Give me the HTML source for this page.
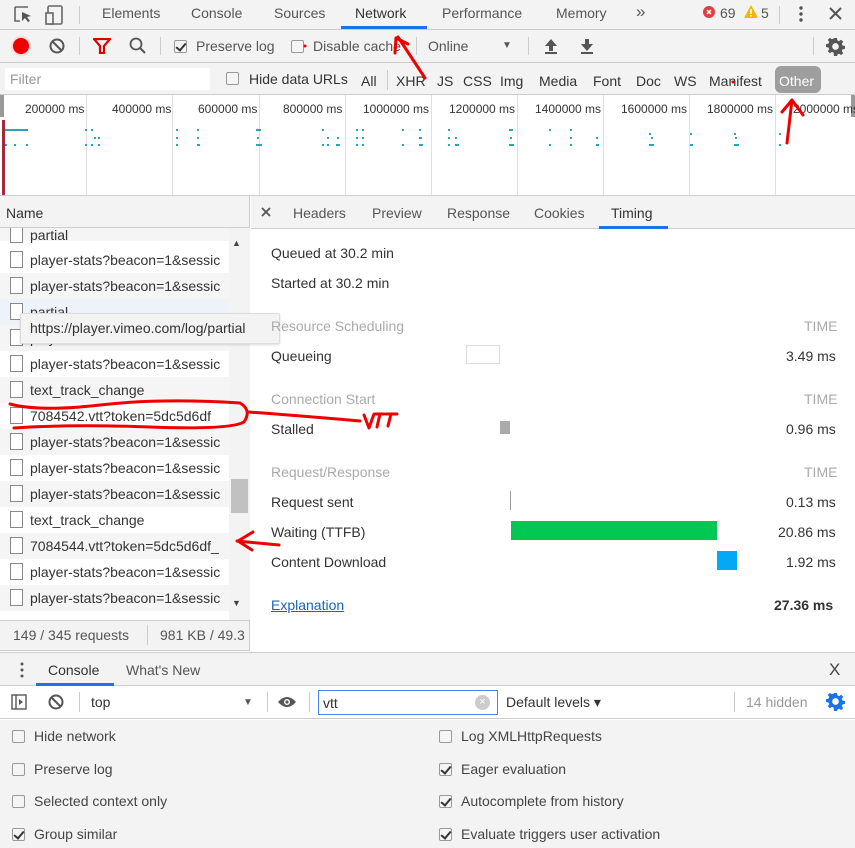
<!DOCTYPE html>
<html><head><meta charset="utf-8"><style>
*{margin:0;padding:0;box-sizing:border-box}
body{width:855px;height:848px;position:relative;overflow:hidden;background:#fff;font-family:"Liberation Sans",Arial,sans-serif;font-size:14px;color:#333}
.a{position:absolute;white-space:nowrap}
.bar{position:absolute;left:0;width:855px;background:#f3f3f3;border-bottom:1px solid #ccc}
.cb{position:absolute;width:13px;height:13px;border:1px solid #999;border-radius:2px;background:#f5f5f5}
.cb.on::after{content:"";position:absolute;left:3px;top:0px;width:4px;height:8px;border:solid #333;border-width:0 2px 2px 0;transform:rotate(40deg)}
.rcb{position:absolute;left:10px;width:13px;height:17px;border:1px solid #888;background:#fff}
.g{color:#aaa}
.sep{position:absolute;width:1px;background:#ccc}
</style></head><body>

<!-- top tabs -->
<div class="bar" style="top:0;height:30px"></div>
<svg class="a" style="left:12px;top:4px" width="60" height="22" viewBox="0 0 60 22">
<path d="M3 3h13M3 3v14h5" stroke="#666" stroke-width="1.6" fill="none"/>
<path d="M10 8l9 4-4 1 3 4-2 1-3-4-3 3z" fill="#555"/>
<rect x="36" y="2" width="14" height="18" rx="1.5" stroke="#666" stroke-width="1.6" fill="none"/>
<rect x="34" y="9" width="7" height="11" stroke="#666" stroke-width="1.6" fill="#f3f3f3"/>
</svg>
<div class="sep" style="left:79px;top:6px;height:18px"></div>
<div class="a" style="left:102px;top:5px;color:#555">Elements</div>
<div class="a" style="left:191px;top:5px;color:#555">Console</div>
<div class="a" style="left:274px;top:5px;color:#555">Sources</div>
<div class="a" style="left:355px;top:5px;color:#333">Network</div>
<div class="a" style="left:341px;top:26px;width:86px;height:3px;background:#1a73e8"></div>
<div class="a" style="left:442px;top:5px;color:#555">Performance</div>
<div class="a" style="left:556px;top:5px;color:#555">Memory</div>
<div class="a" style="left:636px;top:2px;font-size:17px;color:#555">»</div>
<svg class="a" style="left:703px;top:6px" width="12" height="12"><circle cx="6" cy="6" r="6" fill="#e03e3e"/><path d="M4 4l4 4M8 4l-4 4" stroke="#fff" stroke-width="1.5"/></svg>
<div class="a" style="left:720px;top:5px;color:#555">69</div>
<svg class="a" style="left:744px;top:5px" width="14" height="13"><path d="M7 0L14 13H0z" fill="#f4b400"/><rect x="6.2" y="4" width="1.6" height="5" fill="#fff"/><rect x="6.2" y="10" width="1.6" height="1.6" fill="#fff"/></svg>
<div class="a" style="left:761px;top:5px;color:#555">5</div>
<div class="sep" style="left:779px;top:6px;height:18px"></div>
<svg class="a" style="left:798px;top:5px" width="6" height="20"><circle cx="3" cy="3" r="1.7" fill="#555"/><circle cx="3" cy="9" r="1.7" fill="#555"/><circle cx="3" cy="15" r="1.7" fill="#555"/></svg>
<svg class="a" style="left:829px;top:7px" width="13" height="13"><path d="M1 1l11 11M12 1L1 12" stroke="#555" stroke-width="2"/></svg>

<!-- toolbar -->
<div class="bar" style="top:30px;height:33px"></div>
<div class="a" style="left:13px;top:38px;width:16px;height:16px;border-radius:50%;background:#e00;box-shadow:0 0 3px #f88"></div>
<svg class="a" style="left:49px;top:38px" width="16" height="16"><circle cx="8" cy="8" r="6.5" stroke="#555" stroke-width="2" fill="none"/><path d="M3.5 3.5l9 9" stroke="#555" stroke-width="2"/></svg>
<div class="sep" style="left:79px;top:37px;height:18px"></div>
<svg class="a" style="left:93px;top:38px" width="18" height="16"><path d="M1 1h16l-6 7v7h-4v-7z" fill="none" stroke="#d00" stroke-width="2.2"/></svg>
<svg class="a" style="left:129px;top:37px" width="18" height="18"><circle cx="7" cy="7" r="5.5" stroke="#555" stroke-width="1.8" fill="none"/><path d="M11 11l5 5" stroke="#555" stroke-width="2"/></svg>
<div class="sep" style="left:160px;top:37px;height:18px"></div>
<div class="cb on" style="left:174px;top:40px"></div>
<div class="a" style="left:196px;top:38px;color:#555">Preserve log</div>
<div class="cb" style="left:291px;top:40px"></div>
<div class="a" style="left:313px;top:38px;color:#555">Disable cache</div>
<div class="sep" style="left:416px;top:37px;height:18px"></div>
<div class="a" style="left:428px;top:38px;color:#555">Online</div>
<div class="a" style="left:502px;top:40px;font-size:10px;color:#555">▼</div>
<div class="sep" style="left:528px;top:37px;height:18px"></div>
<svg class="a" style="left:544px;top:38px" width="14" height="16"><path d="M7 1L1 8h4v5h4V8h4z" fill="#555"/><rect x="1" y="14" width="12" height="2" fill="#555"/></svg>
<svg class="a" style="left:580px;top:38px" width="14" height="16"><path d="M7 13L1 6h4V1h4v5h4z" fill="#555"/><rect x="1" y="14" width="12" height="2" fill="#555"/></svg>
<div class="sep" style="left:813px;top:37px;height:18px"></div>
<svg class="a" style="left:826px;top:37px" width="19" height="19" viewBox="0 0 20 20"><path fill="#555" d="M8.5 1h3l.5 2.6 1.8.8 2.2-1.5 2.1 2.1-1.5 2.2.8 1.8 2.6.5v3l-2.6.5-.8 1.8 1.5 2.2-2.1 2.1-2.2-1.5-1.8.8-.5 2.6h-3L8 16.4l-1.8-.8L4 17.1 1.9 15l1.5-2.2-.8-1.8L0 10.5v-3l2.6-.5.8-1.8L1.9 3 4 .9l2.2 1.5L8 1.6zM10 6.5a3 3 0 100 7 3 3 0 000-7z"/></svg>

<!-- filter bar -->
<div class="bar" style="top:63px;height:32px"></div>
<div class="a" style="left:5px;top:68px;width:205px;height:22px;background:#fff"></div>
<div class="a" style="left:10px;top:71px;color:#999">Filter</div>
<div class="cb" style="left:226px;top:72px"></div>
<div class="a" style="left:249px;top:71px;color:#333">Hide data URLs</div>
<div class="a" style="left:361px;top:73px">All</div>
<div class="sep" style="left:387px;top:70px;height:20px"></div>
<div class="a" style="left:396px;top:73px">XHR</div>
<div class="a" style="left:437px;top:73px">JS</div>
<div class="a" style="left:463px;top:73px">CSS</div>
<div class="a" style="left:500px;top:73px">Img</div>
<div class="a" style="left:539px;top:73px">Media</div>
<div class="a" style="left:593px;top:73px">Font</div>
<div class="a" style="left:636px;top:73px">Doc</div>
<div class="a" style="left:674px;top:73px">WS</div>
<div class="a" style="left:709px;top:73px">Manifest</div>
<div class="a" style="left:775px;top:66px;width:46px;height:27px;border-radius:6px;background:#9e9e9e"></div>
<div class="a" style="left:779px;top:73px;color:#fff">Other</div>

<!-- timeline -->
<div class="a" style="left:0;top:95px;width:855px;height:101px;background:#fff;border-bottom:1px solid #ccc"></div>
<div class="a" style="left:0;top:95px;width:4px;height:22px;background:#999"></div>
<div class="a" style="left:2px;top:120px;width:3px;height:75px;background:#a3283a"></div>
<div class="a" style="left:851px;top:95px;width:4px;height:22px;background:#999"></div>
<div class="a" style="left:25px;top:102px;font-size:12px">200000 ms</div>
<div class="a" style="left:112px;top:102px;font-size:12px">400000 ms</div>
<div class="a" style="left:198px;top:102px;font-size:12px">600000 ms</div>
<div class="a" style="left:283px;top:102px;font-size:12px">800000 ms</div>
<div class="a" style="left:363px;top:102px;font-size:12px">1000000 ms</div>
<div class="a" style="left:449px;top:102px;font-size:12px">1200000 ms</div>
<div class="a" style="left:535px;top:102px;font-size:12px">1400000 ms</div>
<div class="a" style="left:621px;top:102px;font-size:12px">1600000 ms</div>
<div class="a" style="left:707px;top:102px;font-size:12px">1800000 ms</div>
<div class="a" style="left:793px;top:102px;font-size:12px">2000000 ms</div>
<svg class="a" style="left:0;top:95px" width="855" height="100">
<g stroke="#e0e0e0" stroke-width="1"><path d="M86.5 0v100M172.5 0v100M259.5 0v100M345.5 0v100M431.5 0v100M517.5 0v100M603.5 0v100M689.5 0v100M775.5 0v100"/></g>
<g fill="#2aa5b7">
<rect x="5" y="34" width="23" height="2"/><rect x="5" y="49" width="2" height="2"/><rect x="14" y="49" width="2" height="2"/><rect x="26" y="49" width="2" height="2"/>
<rect x="85" y="34" width="2" height="2"/><rect x="91" y="34" width="2" height="2"/><rect x="94" y="42" width="2" height="2"/><rect x="98" y="42" width="2" height="2"/><rect x="85" y="49" width="2" height="2"/><rect x="91" y="49" width="2" height="2"/><rect x="98" y="49" width="2" height="2"/>
<rect x="176" y="34" width="2" height="2"/><rect x="176" y="42" width="2" height="2"/><rect x="176" y="49" width="2" height="2"/><rect x="197" y="34" width="2" height="2"/><rect x="197" y="42" width="2" height="2"/><rect x="197" y="49" width="3" height="2"/>
<rect x="256" y="34" width="5" height="2"/><rect x="257" y="42" width="2" height="2"/><rect x="256" y="49" width="6" height="2"/>
<rect x="322" y="34" width="2" height="2"/><rect x="327" y="42" width="2" height="2"/><rect x="322" y="49" width="2" height="2"/><rect x="327" y="49" width="2" height="2"/><rect x="336" y="49" width="4" height="2"/><rect x="337" y="42" width="2" height="2"/>
<rect x="356" y="34" width="2" height="2"/><rect x="362" y="34" width="2" height="2"/><rect x="356" y="42" width="2" height="2"/><rect x="362" y="42" width="2" height="2"/><rect x="356" y="49" width="2" height="2"/><rect x="362" y="49" width="2" height="2"/>
<rect x="402" y="34" width="2" height="2"/><rect x="402" y="49" width="2" height="2"/><rect x="419" y="34" width="2" height="2"/><rect x="419" y="42" width="3" height="2"/><rect x="419" y="49" width="4" height="2"/>
<rect x="448" y="34" width="2" height="2"/><rect x="448" y="42" width="2" height="2"/><rect x="455" y="42" width="2" height="2"/><rect x="448" y="49" width="2" height="2"/><rect x="455" y="49" width="4" height="2"/>
<rect x="509" y="34" width="4" height="2"/><rect x="510" y="42" width="2" height="2"/><rect x="509" y="49" width="5" height="2"/>
<rect x="549" y="34" width="2" height="2"/><rect x="549" y="49" width="2" height="2"/><rect x="570" y="34" width="2" height="2"/><rect x="570" y="42" width="2" height="2"/><rect x="570" y="49" width="2" height="2"/><rect x="596" y="42" width="2" height="2"/><rect x="596" y="49" width="3" height="2"/>
<rect x="649" y="38" width="2" height="2"/><rect x="651" y="42" width="2" height="2"/><rect x="649" y="49" width="5" height="2"/><rect x="690" y="38" width="2" height="2"/><rect x="690" y="49" width="3" height="2"/><rect x="734" y="38" width="2" height="2"/><rect x="735" y="42" width="2" height="2"/><rect x="734" y="49" width="5" height="2"/><rect x="779" y="38" width="2" height="2"/><rect x="779" y="49" width="2" height="2"/>
</g></svg>

<!-- left panel -->
<div class="a" style="left:0;top:196px;width:250px;height:32px;background:#f3f3f3;border-bottom:1px solid #ccc;border-right:1px solid #ccc"></div>
<div class="a" style="left:6px;top:205px">Name</div>
<div class="a" style="left:0;top:228px;width:250px;height:392px;background:#fff;border-right:1px solid #ccc"></div>
<div class="a" style="left:229px;top:228px;width:21px;height:392px;background:#f3f3f3"></div>
<div class="a" style="left:232px;top:238px;font-size:9px;color:#444">▲</div>
<div class="a" style="left:232px;top:598px;font-size:9px;color:#444">▼</div>
<div class="a" style="left:231px;top:479px;width:17px;height:34px;background:#c1c1c1"></div>

<div class="a" style="left:0;top:228px;width:229px;height:13px;background:#f5f5f5"></div>
<div class="rcb" style="top:228px;height:15px;border-top:none"></div><div class="a" style="left:30px;top:227px">partial</div>
<div class="a" style="left:0;top:247px;width:229px;height:26px;background:#fff"></div>
<div class="rcb" style="top:251px"></div><div class="a" style="left:30px;top:252px">player-stats?beacon=1&amp;sessic</div>
<div class="a" style="left:0;top:273px;width:229px;height:26px;background:#f5f5f5"></div>
<div class="rcb" style="top:277px"></div><div class="a" style="left:30px;top:278px">player-stats?beacon=1&amp;sessic</div>
<div class="a" style="left:0;top:299px;width:229px;height:26px;background:#eef2f9"></div>
<div class="rcb" style="top:303px"></div><div class="a" style="left:30px;top:304px">partial</div>
<div class="a" style="left:0;top:325px;width:229px;height:26px;background:#f5f5f5"></div>
<div class="rcb" style="top:329px"></div><div class="a" style="left:30px;top:330px">player-stats?beacon=1&amp;sessic</div>
<div class="a" style="left:0;top:351px;width:229px;height:26px;background:#fff"></div>
<div class="rcb" style="top:355px"></div><div class="a" style="left:30px;top:356px">player-stats?beacon=1&amp;sessic</div>
<div class="a" style="left:0;top:377px;width:229px;height:26px;background:#f5f5f5"></div>
<div class="rcb" style="top:381px"></div><div class="a" style="left:30px;top:382px">text_track_change</div>
<div class="a" style="left:0;top:403px;width:229px;height:26px;background:#fff"></div>
<div class="rcb" style="top:407px"></div><div class="a" style="left:30px;top:408px">7084542.vtt?token=5dc5d6df</div>
<div class="a" style="left:0;top:429px;width:229px;height:26px;background:#f5f5f5"></div>
<div class="rcb" style="top:433px"></div><div class="a" style="left:30px;top:434px">player-stats?beacon=1&amp;sessic</div>
<div class="a" style="left:0;top:455px;width:229px;height:26px;background:#fff"></div>
<div class="rcb" style="top:459px"></div><div class="a" style="left:30px;top:460px">player-stats?beacon=1&amp;sessic</div>
<div class="a" style="left:0;top:481px;width:229px;height:26px;background:#f5f5f5"></div>
<div class="rcb" style="top:485px"></div><div class="a" style="left:30px;top:486px">player-stats?beacon=1&amp;sessic</div>
<div class="a" style="left:0;top:507px;width:229px;height:26px;background:#fff"></div>
<div class="rcb" style="top:511px"></div><div class="a" style="left:30px;top:512px">text_track_change</div>
<div class="a" style="left:0;top:533px;width:229px;height:26px;background:#f5f5f5"></div>
<div class="rcb" style="top:537px"></div><div class="a" style="left:30px;top:538px">7084544.vtt?token=5dc5d6df_</div>
<div class="a" style="left:0;top:559px;width:229px;height:26px;background:#fff"></div>
<div class="rcb" style="top:563px"></div><div class="a" style="left:30px;top:564px">player-stats?beacon=1&amp;sessic</div>
<div class="a" style="left:0;top:585px;width:229px;height:26px;background:#f5f5f5"></div>
<div class="rcb" style="top:589px"></div><div class="a" style="left:30px;top:590px">player-stats?beacon=1&amp;sessic</div>
<div class="a" style="left:0;top:611px;width:229px;height:9px;background:#fff"></div>

<!-- tooltip -->
<div class="a" style="left:20px;top:313px;width:260px;height:31px;background:#f3f3f3;border:1px solid #ddd;border-radius:2px;box-shadow:0 1px 2px rgba(0,0,0,.15)"></div>
<div class="a" style="left:30px;top:320px">https://player.vimeo.com/log/partial</div>

<!-- status -->
<div class="a" style="left:0;top:620px;width:250px;height:31px;background:#f3f3f3;border-top:1px solid #ccc;border-right:1px solid #ccc;border-bottom:1px solid #ccc"></div>
<div class="a" style="left:13px;top:627px;color:#555">149 / 345 requests</div>
<div class="sep" style="left:147px;top:625px;height:20px"></div>
<div class="a" style="left:160px;top:627px;color:#555">981 KB / 49.3</div>

<!-- right panel -->
<div class="a" style="left:251px;top:196px;width:604px;height:33px;background:#f3f3f3;border-bottom:1px solid #ccc"></div>
<svg class="a" style="left:261px;top:207px" width="10" height="10"><path d="M1 1l8 8M9 1L1 9" stroke="#555" stroke-width="1.8"/></svg>
<div class="a" style="left:293px;top:205px;color:#555">Headers</div>
<div class="a" style="left:372px;top:205px;color:#555">Preview</div>
<div class="a" style="left:447px;top:205px;color:#555">Response</div>
<div class="a" style="left:534px;top:205px;color:#555">Cookies</div>
<div class="a" style="left:611px;top:205px;color:#333">Timing</div>
<div class="a" style="left:599px;top:226px;width:69px;height:3px;background:#1a73e8"></div>
<div class="a" style="left:271px;top:245px">Queued at 30.2 min</div>
<div class="a" style="left:271px;top:275px">Started at 30.2 min</div>
<div class="a g" style="left:271px;top:318px">Resource Scheduling</div>
<div class="a g" style="left:804px;top:318px">TIME</div>
<div class="a" style="left:271px;top:348px">Queueing</div>
<div class="a" style="left:466px;top:345px;width:34px;height:19px;border:1px solid #ddd;background:#fff"></div>
<div class="a" style="left:786px;top:348px">3.49 ms</div>
<div class="a g" style="left:271px;top:391px">Connection Start</div>
<div class="a g" style="left:804px;top:391px">TIME</div>
<div class="a" style="left:271px;top:421px">Stalled</div>
<div class="a" style="left:500px;top:421px;width:10px;height:13px;background:#aaa"></div>
<div class="a" style="left:786px;top:421px">0.96 ms</div>
<div class="a g" style="left:271px;top:464px">Request/Response</div>
<div class="a g" style="left:804px;top:464px">TIME</div>
<div class="a" style="left:271px;top:494px">Request sent</div>
<div class="a" style="left:510px;top:491px;width:1px;height:19px;background:#999"></div>
<div class="a" style="left:786px;top:494px">0.13 ms</div>
<div class="a" style="left:271px;top:524px">Waiting (TTFB)</div>
<div class="a" style="left:511px;top:521px;width:206px;height:19px;background:#00c853"></div>
<div class="a" style="left:778px;top:524px">20.86 ms</div>
<div class="a" style="left:271px;top:554px">Content Download</div>
<div class="a" style="left:717px;top:551px;width:20px;height:19px;background:#03a9f4"></div>
<div class="a" style="left:786px;top:554px">1.92 ms</div>
<div class="a" style="left:271px;top:597px;color:#1565c0;text-decoration:underline">Explanation</div>
<div class="a" style="left:774px;top:597px;font-weight:bold">27.36 ms</div>

<!-- drawer -->
<div class="bar" style="top:652px;height:34px;border-top:1px solid #ccc"></div>
<svg class="a" style="left:20px;top:662px" width="4" height="16"><circle cx="2" cy="2" r="1.5" fill="#555"/><circle cx="2" cy="8" r="1.5" fill="#555"/><circle cx="2" cy="14" r="1.5" fill="#555"/></svg>
<div class="a" style="left:48px;top:662px;color:#333">Console</div>
<div class="a" style="left:36px;top:683px;width:78px;height:3px;background:#1a73e8"></div>
<div class="a" style="left:126px;top:662px;color:#555">What's New</div>
<div class="a" style="left:829px;top:660px;font-size:17px;color:#444">X</div>
<div class="a" style="left:0;top:686px;width:855px;height:33px;background:#fff;border-bottom:1px solid #ccc"></div>
<svg class="a" style="left:11px;top:694px" width="16" height="16"><rect x="1" y="1" width="14" height="14" fill="none" stroke="#555" stroke-width="1.4"/><path d="M5 1v14" stroke="#555" stroke-width="1.4"/><path d="M8 5l4 3-4 3z" fill="#555"/></svg>
<svg class="a" style="left:48px;top:694px" width="16" height="16"><circle cx="8" cy="8" r="6.5" stroke="#555" stroke-width="2" fill="none"/><path d="M3.5 3.5l9 9" stroke="#555" stroke-width="2"/></svg>
<div class="sep" style="left:79px;top:692px;height:20px"></div>
<div class="a" style="left:91px;top:694px;color:#333">top</div>
<div class="a" style="left:243px;top:697px;font-size:10px;color:#555">▼</div>
<div class="sep" style="left:267px;top:692px;height:20px"></div>
<svg class="a" style="left:277px;top:695px" width="20" height="14"><path d="M1 7Q10-3 19 7Q10 17 1 7z" fill="#555"/><circle cx="10" cy="7" r="3" fill="#fff"/><circle cx="10" cy="7" r="1.6" fill="#555"/></svg>
<div class="sep" style="left:309px;top:692px;height:20px"></div>
<div class="a" style="left:318px;top:690px;width:180px;height:25px;border:1px solid #4285f4;background:#fff"></div>
<div class="a" style="left:323px;top:695px">vtt</div>
<div class="a" style="left:475px;top:695px;width:15px;height:15px;border-radius:50%;background:#ccc;color:#fff;font-size:11px;text-align:center;line-height:15px">×</div>
<div class="a" style="left:506px;top:694px;color:#333">Default levels ▾</div>
<div class="sep" style="left:734px;top:692px;height:20px"></div>
<div class="a" style="left:746px;top:694px;color:#999">14 hidden</div>
<svg class="a" style="left:826px;top:692px" width="19" height="19" viewBox="0 0 20 20"><path fill="#1a73e8" d="M8.5 1h3l.5 2.6 1.8.8 2.2-1.5 2.1 2.1-1.5 2.2.8 1.8 2.6.5v3l-2.6.5-.8 1.8 1.5 2.2-2.1 2.1-2.2-1.5-1.8.8-.5 2.6h-3L8 16.4l-1.8-.8L4 17.1 1.9 15l1.5-2.2-.8-1.8L0 10.5v-3l2.6-.5.8-1.8L1.9 3 4 .9l2.2 1.5L8 1.6zM10 6.5a3 3 0 100 7 3 3 0 000-7z"/></svg>
<div class="a" style="left:0;top:720px;width:855px;height:128px;background:#f3f3f3"></div>
<div class="cb" style="left:12px;top:730px"></div><div class="a" style="left:34px;top:728px;color:#444">Hide network</div>
<div class="cb" style="left:12px;top:763px"></div><div class="a" style="left:34px;top:761px;color:#444">Preserve log</div>
<div class="cb" style="left:12px;top:795px"></div><div class="a" style="left:34px;top:793px;color:#444">Selected context only</div>
<div class="cb on" style="left:12px;top:828px"></div><div class="a" style="left:34px;top:826px;color:#444">Group similar</div>
<div class="cb" style="left:439px;top:730px"></div><div class="a" style="left:461px;top:728px;color:#444">Log XMLHttpRequests</div>
<div class="cb on" style="left:439px;top:763px"></div><div class="a" style="left:461px;top:761px;color:#444">Eager evaluation</div>
<div class="cb on" style="left:439px;top:795px"></div><div class="a" style="left:461px;top:793px;color:#444">Autocomplete from history</div>
<div class="cb on" style="left:439px;top:828px"></div><div class="a" style="left:461px;top:826px;color:#444">Evaluate triggers user activation</div>

<!-- red annotations -->
<svg class="a" style="left:0;top:0" width="855" height="848">
<g stroke="#e00" stroke-width="3" fill="none" stroke-linecap="round" stroke-linejoin="round">
<path d="M398 37L425 78M396 38l-1 15M396 38l12 6"/>
<path d="M787 143L792 100M782 112l10-12 11 15"/>
<path d="M10 404Q40 412 100 405T240 403Q252 410 244 422Q230 430 150 427T14 428"/>
<path d="M248 412Q290 415 360 421"/>
<path d="M364 415l5 13 5-14M375 414h9M380 414l-3 13M386 414h11M391 414l-3 12"/>
<path d="M237 541l42 4M253 532l-15 9 14 9"/>
</g>
<circle cx="733" cy="82" r="1.5" fill="#e00"/>
<circle cx="305" cy="46" r="1.5" fill="#e00"/>
</svg>
</body></html>
